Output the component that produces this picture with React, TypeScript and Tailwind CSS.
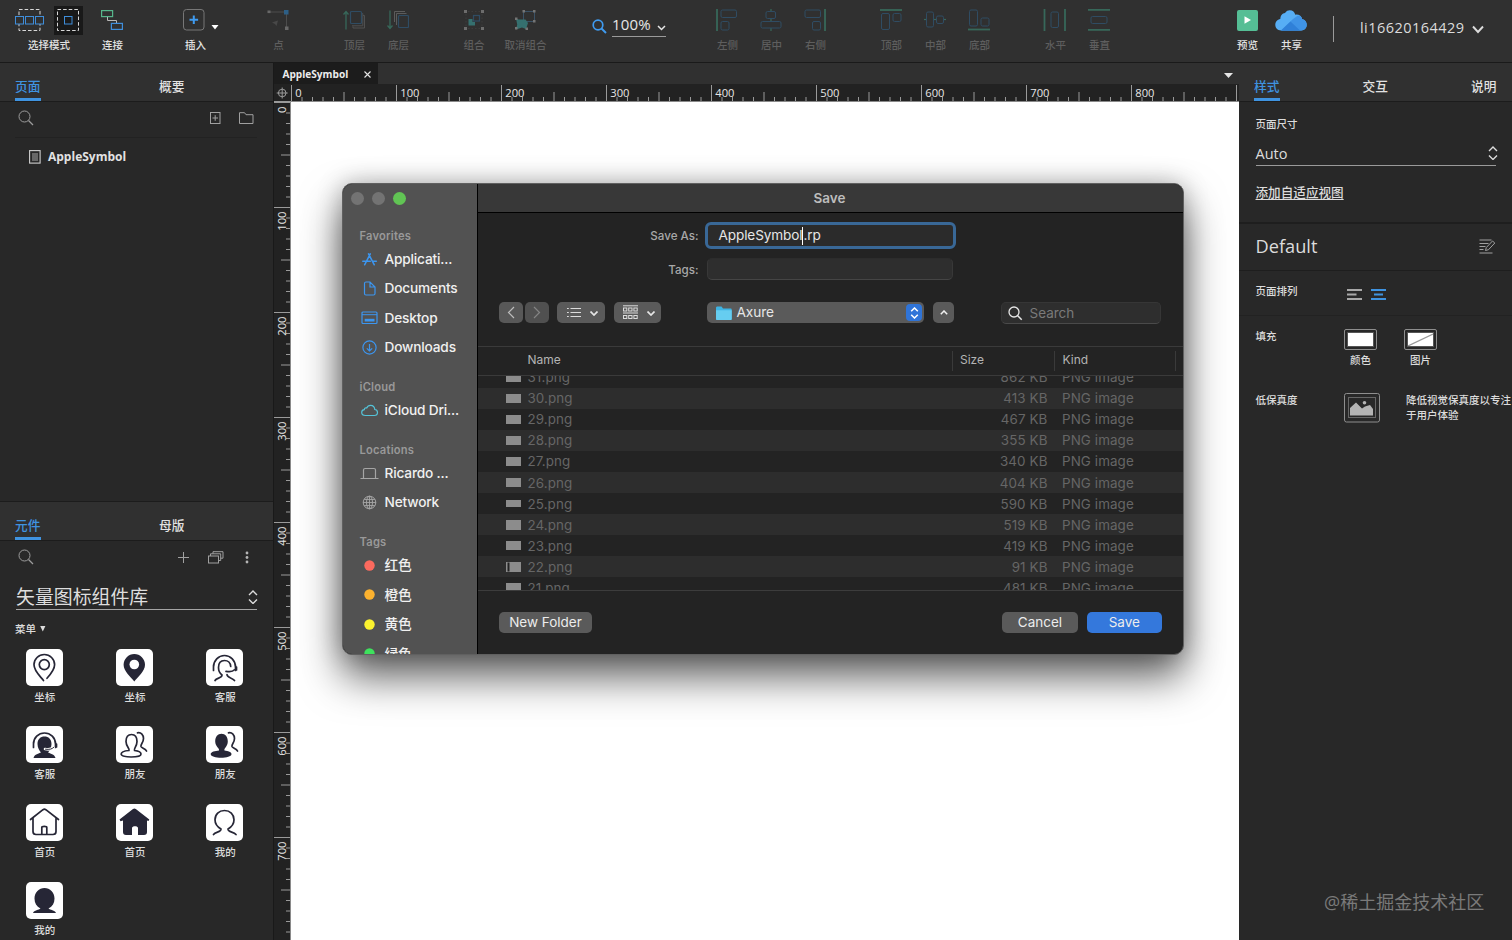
import type { ReactNode } from 'react'
import { clsx } from 'clsx'

const INK = '#262636'

interface SvgProps {
  w: number
  h: number
  className?: string
  children: ReactNode
}

function Svg({ w, h, className, children }: SvgProps) {
  return (
    <svg width={w} height={h} viewBox={`0 0 ${w} ${h}`} fill="none" className={clsx('shrink-0', className)}>
      {children}
    </svg>
  )
}

/* ---------- Toolbar ---------- */

interface ToolProps {
  label: string
  disabled?: boolean
  className?: string
  children: ReactNode
}

function Tool({ label, disabled, className, children }: ToolProps) {
  return (
    <div className={clsx('flex shrink-0 flex-col items-center', className)}>
      <div className="flex h-7 items-center justify-center">{children}</div>
      <span
        className={clsx(
          'mt-1 h-[14px] pl-px text-[10.5px] leading-[14px] font-medium whitespace-nowrap',
          disabled ? 'text-[#5e5e5e]' : 'text-[#e2e2e2]',
        )}
      >
        {label}
      </span>
    </div>
  )
}

const G = '#37685a'
const B = '#2f4c63'

function Toolbar() {
  return (
    <header className="flex h-[63px] shrink-0 border-b border-[#1a1a1a] bg-[#303030] pt-1.5">
      <Tool label="选择模式" className="ml-3 w-[73px]">
        <Svg w={29} h={28}>
          <rect x="4" y="3.5" width="21" height="21" stroke="#d8d8d8" strokeDasharray="3.6 2" />
          <rect x="0.5" y="10.5" width="8" height="7.5" fill="#303030" stroke="#3f8edb" />
          <rect x="10.5" y="10.5" width="8" height="7.5" fill="#303030" stroke="#3f8edb" />
          <rect x="20.5" y="10.5" width="8" height="7.5" fill="#303030" stroke="#3f8edb" />
        </Svg>
        <div className="ml-[10px] flex h-[29px] w-[29px] items-center justify-center bg-[#191919]">
          <Svg w={22} h={22}>
            <rect x="0.5" y="0.5" width="21" height="21" stroke="#d8d8d8" strokeDasharray="3.6 2" />
            <rect x="7.5" y="7.5" width="7.5" height="7.5" stroke="#3f8edb" />
          </Svg>
        </div>
      </Tool>
      <Tool label="连接" className="ml-[5px] w-11">
        <Svg w={22} h={22}>
          <rect x="0.6" y="1.6" width="11" height="6" stroke="#56b68b" strokeWidth="1.2" />
          <path d="M6.5 8v3.5h9V14" stroke="#b9b9b9" />
          <rect x="10.4" y="14.4" width="11" height="6" stroke="#3f8edb" strokeWidth="1.2" />
        </Svg>
      </Tool>
      <Tool label="插入" className="relative ml-[39px] w-11">
        <Svg w={22} h={22} className="mr-[3px]">
          <rect x="0.5" y="0.5" width="20.5" height="20.5" rx="3" stroke="#777" />
          <path d="M6.5 10.8h8.6M10.8 6.5v8.6" stroke="#3f9bf0" strokeWidth="2" />
        </Svg>
        <Svg w={8} h={5} className="absolute top-[18.5px] left-[38px]">
          <path d="M0.5 0h7L4 4.4z" fill="#fff" />
        </Svg>
      </Tool>
      <Tool label="点" disabled className="ml-[39px] w-11">
        <Svg w={22} h={22}>
          <path d="M3 3h14M19.5 5v13" stroke="#4c4c4c" />
          <rect x="0.5" y="1.5" width="3" height="2.6" fill="#686868" />
          <rect x="17" y="1" width="4.5" height="4.5" fill="#2d5f86" />
          <rect x="18" y="17.5" width="3.5" height="3.5" fill="#686868" />
          <path d="M5 13.5l6-2-1.5 5.5-1.5-2z" fill="#484848" />
        </Svg>
      </Tool>
      <Tool label="顶层" disabled className="ml-8 w-11">
        <Svg w={22} h={22}>
          <path d="M3 20.5V3M0.5 5.5L3 2.5l2.5 3" stroke={G} strokeWidth="1.3" />
          <path d="M20 6.5h1.5v12.5H10v-1.5M19 4.5h.8v12.3H9" stroke="#505050" />
          <rect x="7.5" y="2.5" width="11" height="12" rx="1" stroke={B} strokeWidth="1.2" />
        </Svg>
      </Tool>
      <Tool label="底层" disabled className="w-11">
        <Svg w={22} h={22}>
          <path d="M3 1.5V19M0.5 16.5L3 19.5l2.5-3" stroke={G} strokeWidth="1.3" />
          <path d="M7.5 13V2.5H18M9.5 16V4.5H19.5" stroke="#5b5b5b" />
          <rect x="11.5" y="6.5" width="10" height="12" rx="1" stroke={B} strokeWidth="1.2" />
        </Svg>
      </Tool>
      <Tool label="组合" disabled className="ml-[31.5px] w-11">
        <Svg w={22} h={22}>
          {[1, 18].map((x) =>
            [1, 18].map((y) => <rect key={`${x}-${y}`} x={x} y={y} width="3" height="3" fill="#6c6c6c" />),
          )}
          <rect x="10.5" y="6.5" width="6" height="5.5" stroke={B} strokeWidth="1.2" />
          <path d="M5.5 10h4v3H12v3.5H5.5z" fill="#35706f" />
          <path d="M3 5v12M19 5v12M5 2.5h12M5 19.5h12" stroke="#3c3c3c" strokeDasharray="1.5 2" />
        </Svg>
      </Tool>
      <Tool label="取消组合" disabled className="ml-[4.5px] w-[50px]">
        <Svg w={22} h={22}>
          <rect x="9.5" y="2.5" width="11" height="10" stroke="#3b5266" />
          <path d="M2 9.5l2.5 1h7L14 14l-2 6-4-1.5L2 20.5l1.2-5z" fill="#35706f" />
          {[
            [8.5, 1],
            [19, 1],
            [19, 11],
            [1, 8.5],
            [1, 18],
            [11.5, 18.5],
          ].map(([x, y]) => (
            <rect key={`${x}-${y}`} x={x} y={y} width="2.5" height="2.5" fill="#747474" />
          ))}
        </Svg>
      </Tool>

      <div className="mt-[8px] ml-[42px] flex h-[23px] w-[74px]">
        <Svg w={15} h={15} className="mt-[5px]">
          <circle cx="6" cy="6" r="4.8" stroke="#3f9bf0" strokeWidth="1.7" />
          <path d="M9.5 9.5l4.5 4.5" stroke="#3f9bf0" strokeWidth="2" />
        </Svg>
        <div className="ml-[5px] flex w-[54px] items-center border-b border-[#9a9a9a] pb-px text-[15px] text-[#e6e6e6]">
          <span className="w-[45px] tracking-[0.2px]">100%</span>
          <Svg w={9} h={6} className="mt-[7px]">
            <path d="M1 1l3.5 3.5L8 1" stroke="#e6e6e6" strokeWidth="1.5" />
          </Svg>
        </div>
      </div>

      <Tool label="左侧" disabled className="ml-[39px] w-11">
        <Svg w={22} h={22}>
          <path d="M1 0v22" stroke={G} strokeWidth="1.8" />
          <rect x="5" y="1" width="15.5" height="7.5" rx="1.5" stroke={B} />
          <rect x="5" y="12.5" width="8" height="8.5" rx="1.5" stroke={B} />
        </Svg>
      </Tool>
      <Tool label="居中" disabled className="w-11">
        <Svg w={22} h={22}>
          <path d="M11 0v22" stroke={G} strokeWidth="1.2" />
          <rect x="6" y="2.5" width="9.5" height="7" rx="1.5" fill="#303030" stroke={B} />
          <rect x="1" y="12.5" width="20" height="6.5" rx="1.5" fill="#303030" stroke={B} />
        </Svg>
      </Tool>
      <Tool label="右侧" disabled className="w-11">
        <Svg w={22} h={22}>
          <path d="M21 0v22" stroke={G} strokeWidth="1.8" />
          <rect x="1" y="1" width="15.5" height="7.5" rx="1.5" stroke={B} />
          <rect x="8.5" y="12.5" width="8" height="8.5" rx="1.5" stroke={B} />
        </Svg>
      </Tool>
      <Tool label="顶部" disabled className="ml-8 w-11">
        <Svg w={22} h={22}>
          <path d="M0 1h22" stroke={G} strokeWidth="1.8" />
          <rect x="1.5" y="4.5" width="8" height="16" rx="1.5" stroke={B} />
          <rect x="13" y="4.5" width="8" height="8" rx="1.5" stroke={B} />
        </Svg>
      </Tool>
      <Tool label="中部" disabled className="w-11">
        <Svg w={22} h={22}>
          <path d="M0 10.5h22" stroke={G} strokeWidth="1.2" />
          <rect x="2.5" y="3" width="7" height="15" rx="1.5" fill="#303030" stroke={B} />
          <rect x="12.5" y="7" width="7" height="7.5" rx="1.5" fill="#303030" stroke={B} />
        </Svg>
      </Tool>
      <Tool label="底部" disabled className="w-11">
        <Svg w={22} h={22}>
          <path d="M0 20.5h22" stroke={G} strokeWidth="1.8" />
          <rect x="1.5" y="1" width="8" height="16" rx="1.5" stroke={B} />
          <rect x="13" y="9" width="8" height="8" rx="1.5" stroke={B} />
        </Svg>
      </Tool>
      <Tool label="水平" disabled className="ml-8 w-11">
        <Svg w={24} h={22}>
          <path d="M1.5 0v22M22 0v22" stroke={G} strokeWidth="1.8" />
          <rect x="8" y="3" width="7.5" height="15.5" rx="1.5" stroke={B} />
        </Svg>
      </Tool>
      <Tool label="垂直" disabled className="w-11">
        <Svg w={22} h={22}>
          <path d="M0 0.8h22M0 20.8h22" stroke={G} strokeWidth="1.8" />
          <rect x="3" y="7.5" width="16" height="7" rx="1.5" stroke={B} />
        </Svg>
      </Tool>

      <Tool label="预览" className="ml-[104px] w-11">
        <div className="flex h-[21px] w-[21px] items-center justify-center rounded-[2px] bg-[#55be95]">
          <Svg w={7} h={8}>
            <path d="M0.5 0.3L7 4 0.5 7.7z" fill="#fff" />
          </Svg>
        </div>
      </Tool>
      <Tool label="共享" className="w-11">
        <Svg w={32} h={21}>
          <path
            d="M6 20.5C2.5 20.5.3 18 .3 14.8c0-3 2-5.6 5-5.900C5.5 5.5 7.5 3.200 10 3c1.400-2 3-2.700 4.800-2.700 3 0 5 2 5.400 4.400 3.500-.6 6.500 1.300 7 4.600 2.600.3 4.500 2.800 4.500 5.500 0 3.200-2.200 5.700-5.500 5.700z"
            fill="#57aef5"
          />
          <path d="M6 20.5L18 9l5-3.500c2.500.2 4 2 4.200 3.800 2.600.3 4.500 2.800 4.500 5.500 0 3.200-2.200 5.700-5.500 5.700z" fill="#3f93e6" />
          <path d="M6 20.5L15.500 11.500l9.500 9z" fill="#2f80d8" />
        </Svg>
      </Tool>
      <div className="mt-[10px] ml-5 h-[26px] w-px bg-[#9a9a9a]" />
      <div className="mt-[12px] ml-[26px] flex h-5 items-center text-[14.5px] text-[#dcdcdc]">
        <span className="w-[105px] tracking-[0.45px] whitespace-nowrap">li16620164429</span>
        <Svg w={12} h={9} className="mt-[3px] ml-[7px]">
          <path d="M1 1.5l5 5.5 5-5.5" stroke="#dcdcdc" strokeWidth="1.9" />
        </Svg>
      </div>
    </header>
  )
}

/* ---------- Shared panel bits ---------- */

function PanelTabs({ tabs, narrow }: { tabs: string[]; narrow?: boolean }) {
  return (
    <div
      className={clsx(
        'flex h-[39px] shrink-0 border-b border-[#1c1c1c] bg-[#303030] pr-[15px] pl-[15px]',
        narrow && 'justify-between',
      )}
    >
      {tabs.map((tab, i) => (
        <div
          key={tab}
          className={clsx(
            'flex h-[38px] w-[26px] items-end border-b-[3px] pb-[2.5px] text-[12.7px] leading-[20px] font-medium whitespace-nowrap',
            i === 0 ? 'border-[#3f93e0] text-[#3f93e0]' : 'border-transparent text-[#e2e2e2]',
            !narrow && i === 1 && 'ml-[118px]',
          )}
        >
          {tab}
        </div>
      ))}
    </div>
  )
}

function SearchGlyph() {
  return (
    <Svg w={16} h={16}>
      <circle cx="6.5" cy="6.5" r="5.5" stroke="#9c9c9c" />
      <path d="M10.5 10.5l4.5 4.5" stroke="#9c9c9c" strokeWidth="1.2" />
    </Svg>
  )
}

function UpDown({ className }: { className?: string }) {
  return (
    <Svg w={10} h={14} className={className}>
      <path d="M1 5l4-4 4 4M1 9.5l4 4 4-4" stroke="#dcdcdc" strokeWidth="1.4" />
    </Svg>
  )
}

/* ---------- Left side ---------- */

const glyphs: Record<string, ReactNode> = {
  pin: (
    <>
      <path d="M17.5 31.5C14 27 8 22 8 15.8a10.3 10.3 0 0 1 20.6 0c0 5-4 9.5-7.6 13.5" />
      <circle cx="18.3" cy="15.6" r="5" />
    </>
  ),
  pinSolid: (
    <>
      <path d="M18.3 32.5C15 28 7.6 22.5 7.6 15.8a10.7 10.7 0 0 1 21.4 0C29 22.5 21.6 28 18.3 32.5z" fill={INK} stroke="none" />
      <circle cx="18.3" cy="15.5" r="4.8" fill="#fff" stroke="none" />
    </>
  ),
  service: (
    <>
      <path d="M7.5 21.5v-3.500a11 11.500 0 0 1 22 0v3.500M30.500 18v3" />
      <path d="M9 31.500c1.500-3 7-2 7-5.500-2-1.500-3.500-4.500-3.500-7.500 0-4.500 2.500-7 6-7s6 2.500 6.200 6" />
      <path d="M20 22.300c3.500.7 7 .2 8.500-1.500M21 25.500c0 3.500 5.500 3 7.500 6" />
    </>
  ),
  serviceSolid: (
    <>
      <path d="M7.5 21.500V18a11 11 0 0 1 22 0v3.500M30.500 18v3" />
      <path
        d="M11.500 18c0-5 3-7.500 7-7.500s7 2.500 7 7.500c0 4-2 6.500-3.500 8.500 2 1 6.500 1.500 7.500 5.500h-22c1-4 5.500-4.500 7.500-5.500-1.500-2-3.500-4.500-3.500-8.500z"
        fill={INK}
        stroke="none"
      />
      <path d="M19 23c4 .8 7 0 8.500-2" stroke="#fff" strokeWidth="2.6" />
      <path d="M19.500 23.200c4 .5 7 0 8.500-2.200" strokeWidth="1" />
    </>
  ),
  friends: (
    <>
      <path d="M13 24.500c1-2-3-4-3-9 0-4.500 2-7 5.500-7s5.500 2.500 5.500 7c0 5-3.500 7-2.500 9 3.500.4 6.500 1.500 6.500 3.500 0 4-19.800 4-19.800 0 0-2 4-3.200 7.800-3.500z" />
      <path d="M21.500 6.800c3.800-.6 6 2 6 5.700 0 4-3 5.500-2.500 8 .5 1.500 4.500 2 5.500 4.500" />
    </>
  ),
  friendsSolid: (
    <>
      <path
        d="M13 24.500c1-2-3.800-4-3.800-9 0-5 2.500-7.800 6.300-7.800s6.300 2.800 6.300 7.800c0 5-4.300 7-3.300 9 3.500.4 7 1.500 7 3.500 0 5-20.800 5-20.800 0 0-2 4.500-3.200 8.300-3.500z"
        fill={INK}
        stroke="none"
      />
      <path d="M22.500 6.800c3.800-.6 6 2 6 5.700 0 4-3 5.500-2.500 8 .5 1.500 4.500 2 5.500 4.500" />
    </>
  ),
  home: (
    <>
      <path d="M4.500 15.500L17 5.700c1-.7 1.800-.7 2.800 0L32.500 15.500M7 14v13.500c0 2 1 3 3 3h17c2 0 3-1 3-3V14" />
      <path d="M15.800 30V23.500c0-1.500 5-1.500 5 0V30" />
    </>
  ),
  homeSolid: (
    <path
      d="M3.500 15.500L17 5c1-.7 1.800-.7 2.800 0l13.500 10.500-.8 1.500-1.500-.5v11.500c0 2-1 3-3 3h-6v-7c0-2.500-6-2.500-6 0v7H10c-2 0-3-1-3-3V16.500l-2.500.8z"
      fill={INK}
      stroke="none"
    />
  ),
  mine: (
    <path d="M7.500 30.500c2-3 7.500-2 7.500-5.500C11.500 23 9 20 9 15.800c0-5.500 4-9.300 9.500-9.300S28 10.300 28 15.800c0 4.200-2.500 7.200-6 9.200 0 3.500 5.500 2.500 8 5.500" />
  ),
  mineSolid: (
    <path
      d="M7 31c1-3 6-3 7.500-4.500-4-2-6-5.500-6-10 0-6 4.500-10.500 10-10.500s10 4.500 10 10.500c0 4.500-2 8-6 10 1.500 1.500 6.500 1.500 7.500 4.500z"
      fill={INK}
      stroke="none"
    />
  ),
}

const widgets = [
  { glyph: 'pin', label: '坐标' },
  { glyph: 'pinSolid', label: '坐标' },
  { glyph: 'service', label: '客服' },
  { glyph: 'serviceSolid', label: '客服' },
  { glyph: 'friends', label: '朋友' },
  { glyph: 'friendsSolid', label: '朋友' },
  { glyph: 'home', label: '首页' },
  { glyph: 'homeSolid', label: '首页' },
  { glyph: 'mine', label: '我的' },
  { glyph: 'mineSolid', label: '我的' },
]

function LeftPanel() {
  return (
    <aside className="flex w-[274px] shrink-0 flex-col border-r border-[#191919] bg-[#282828]">
      {/* Pages */}
      <section className="flex h-[439px] shrink-0 flex-col border-b border-[#1c1c1c]">
        <PanelTabs tabs={['页面', '概要']} />
        <div className="mr-4 ml-[15px] flex h-9 items-center border-b border-[#222] pb-[3px] pl-[3px]">
          <SearchGlyph />
          <Svg w={11} h={12} className="ml-auto">
            <rect x="0.5" y="0.5" width="9.5" height="11" stroke="#a0a0a0" />
            <path d="M5.2 3.2v5.6M2.5 6h5.5" stroke="#a0a0a0" />
          </Svg>
          <Svg w={15} h={12} className="mr-[3px] ml-[18px]">
            <path d="M0.5 11.5V0.7h5l1.5 2h7v8.800z" stroke="#a0a0a0" />
          </Svg>
        </div>
        <div className="mt-[9px] flex h-5 items-center pl-[29px]">
          <Svg w={12} h={14}>
            <rect x="0.6" y="0.6" width="10.5" height="12.5" stroke="#cfcfcf" strokeWidth="1.1" />
            <path d="M3 4h6M3 6h6M3 8h6M3 10h6" stroke="#b5b5b5" strokeWidth="0.9" />
          </Svg>
          <span className="ml-[7px] text-[12px] font-bold text-[#e2e2e2]">AppleSymbol</span>
        </div>
      </section>

      {/* Widget library */}
      <section className="flex min-h-0 flex-1 flex-col overflow-hidden">
        <PanelTabs tabs={['元件', '母版']} />
        <div className="mr-4 ml-[15px] flex h-8 shrink-0 items-center pl-[3px]">
          <SearchGlyph />
          <Svg w={11} h={11} className="ml-auto">
            <path d="M5.5 0v11M0 5.5h11" stroke="#a0a0a0" />
          </Svg>
          <Svg w={16} h={13} className="ml-[19px]">
            <rect x="0.5" y="5" width="10" height="7" stroke="#a0a0a0" />
            <path d="M2.5 5V2.8h10.200V9.500H10.500M5 2.800V0.700h10v6.500h-2.300" stroke="#a0a0a0" />
          </Svg>
          <Svg w={4} h={13} className="mr-[8.5px] ml-[20.5px]">
            <circle cx="2" cy="2" r="1.4" fill="#b5b5b5" />
            <circle cx="2" cy="6.5" r="1.4" fill="#b5b5b5" />
            <circle cx="2" cy="11" r="1.4" fill="#b5b5b5" />
          </Svg>
        </div>
        <div className="mt-[10px] mr-4 ml-4 flex h-[27px] shrink-0 items-center border-b border-[#a5a5a5]">
          <span className="pt-[2px] text-[18.9px] leading-[24px] text-[#dedede]">矢量图标组件库</span>
          <UpDown className="mt-px mr-[-1px] ml-auto" />
        </div>
        <div className="mt-[12px] ml-[15px] flex h-4 shrink-0 items-center text-[10.5px] font-medium text-[#dcdcdc]">
          菜单
          <Svg w={6} h={6} className="mb-[2px] ml-[4px]">
            <path d="M0.2 0h5.2L2.8 5.5z" fill="#dcdcdc" />
          </Svg>
        </div>
        <div className="mt-[10.5px] grid w-[271px] shrink-0 grid-cols-3">
          {widgets.map((item) => (
            <div key={item.glyph} className="flex h-[77.7px] flex-col items-center pr-[2px]">
              <div className="h-[37px] w-[37px] shrink-0 rounded-[5px] bg-white">
                <svg
                  width="37"
                  height="37"
                  viewBox="0 0 37 37"
                  fill="none"
                  stroke={INK}
                  strokeWidth="1.7"
                  strokeLinecap="round"
                  strokeLinejoin="round"
                >
                  {glyphs[item.glyph]}
                </svg>
              </div>
              <span className="mt-[4px] pl-px text-[10.5px] leading-[14px] font-medium text-[#dcdcdc]">{item.label}</span>
            </div>
          ))}
        </div>
      </section>
    </aside>
  )
}

/* ---------- Canvas ---------- */

const ticks = Array.from({ length: 91 }, (_, i) => i)

function HorizontalRuler() {
  return (
    <Svg w={948} h={18}>
      {ticks.map((i) => {
        const x = 0.5 + i * 10.5
        const top = i % 10 === 0 ? 1 : i % 5 === 0 ? 8 : 13
        return <path key={i} d={`M${x} ${top}V17`} stroke="#9a9a9a" />
      })}
      {ticks
        .filter((i) => i % 10 === 0 && i < 90)
        .map((i) => (
          <text key={i} x={i * 10.5 + 4.3} y="12.8" fontSize="11.2" fill="#e6e6e6">
            {i * 10}
          </text>
        ))}
      <path d="M0 17.5h948" stroke="#8a8a8a" />
    </Svg>
  )
}

function VerticalRuler() {
  return (
    <Svg w={17} h={838}>
      {ticks.map((i) => {
        const y = 0.5 + i * 10.5
        const left = i % 10 === 0 ? 0 : i % 5 === 0 ? 7 : 12
        return <path key={i} d={`M${left} ${y}H16`} stroke="#9a9a9a" />
      })}
      {ticks
        .filter((i) => i % 10 === 0 && i < 80)
        .map((i) => (
          <text
            key={i}
            transform={`translate(12.2 ${i * 10.5 + 4.5}) rotate(-90)`}
            textAnchor="end"
            fontSize="11.2"
            fill="#e6e6e6"
          >
            {i * 10}
          </text>
        ))}
      <path d="M16.5 0v838" stroke="#8a8a8a" />
    </Svg>
  )
}

function Canvas() {
  return (
    <main className="flex w-[965px] shrink-0 flex-col bg-[#222]">
      <div className="flex h-[21px] shrink-0 items-center bg-[#303030]">
        <div className="flex h-full w-[104px] items-center bg-[#1c1c1c] pt-[2px] pl-[8.5px] text-[10.1px] font-bold text-[#ececec]">
          <span className="w-[66px]">AppleSymbol</span>
          <Svg w={7} h={7} className="ml-[15px]">
            <path d="M0.5 0.5l6 6M6.5 0.5l-6 6" stroke="#e6e6e6" strokeWidth="1.1" />
          </Svg>
        </div>
        <Svg w={9} h={5} className="mt-[4px] mr-[6px] ml-auto">
          <path d="M0 0h9L4.5 5z" fill="#e6e6e6" />
        </Svg>
      </div>
      <div className="flex h-[18px] shrink-0">
        <Svg w={17} h={18}>
          <circle cx="8.2" cy="9" r="3.8" stroke="#9a9a9a" />
          <path d="M8.2 3.5v11M2.7 9h11" stroke="#9a9a9a" />
          <path d="M0 17.5h17" stroke="#9a9a9a" />
        </Svg>
        <HorizontalRuler />
      </div>
      <div className="flex min-h-0 flex-1">
        <VerticalRuler />
        <div className="flex-1 bg-white" />
      </div>
    </main>
  )
}

/* ---------- Right side ---------- */

function RightPanel() {
  return (
    <aside className="flex w-[273px] shrink-0 flex-col bg-[#282828] text-[10.5px] font-medium text-[#dcdcdc]">
      <PanelTabs tabs={['样式', '交互', '说明']} narrow />
      <div className="flex h-[122px] shrink-0 flex-col border-b-2 border-[#1e1e1e] pr-4 pl-[16.5px]">
        <span className="mt-[15px] leading-[15px]">页面尺寸</span>
        <div className="mt-[11px] flex h-[23px] items-center border-b border-[#9a9a9a] text-[14.5px] font-normal">
          Auto
          <UpDown className="mt-[-3px] mr-[-2px] ml-auto" />
        </div>
        <span className="mt-[17px] text-[12.6px] leading-[20px] underline underline-offset-2">添加自适应视图</span>
      </div>
      <div className="flex h-[47px] shrink-0 items-center border-b border-[#1e1e1e] pr-4 pb-px pl-[16.5px]">
        <span className="text-[18.2px] font-normal">Default</span>
        <Svg w={17} h={15} className="ml-auto">
          <path d="M0.5 1h12M0.5 4.5h9M0.5 7.5h6M0.5 10.5h4M0.5 14h13" stroke="#a0a0a0" strokeWidth="1.1" />
          <path d="M6.5 11.5l.8-3L13.5 2l2.3 2-6.3 6.700z" stroke="#a0a0a0" fill="#282828" />
        </Svg>
      </div>
      <div className="flex h-[45px] shrink-0 border-b border-[#222] pt-[13px] pl-[16.5px]">
        <span className="w-[91px] shrink-0 leading-[15px]">页面排列</span>
        <Svg w={16} h={11} className="mt-[4.5px]">
          <path d="M0 1h15M0 5.5h9.5M0 10h15" stroke="#a8a8a8" strokeWidth="1.8" />
        </Svg>
        <Svg w={16} h={11} className="mt-[4.5px] ml-[8px]">
          <path d="M0 1h15M3 5.5h9M0 10h15" stroke="#3f93e0" strokeWidth="1.8" />
        </Svg>
      </div>
      <div className="flex h-[77px] shrink-0 pt-[13px] pl-[16.5px]">
        <span className="w-[88.5px] shrink-0 leading-[15px]">填充</span>
        <div className="flex w-[33px] flex-col items-center">
          <div className="h-[21px] w-[33px] rounded-[2px] border border-[#8e8e8e] p-[2px]">
            <div className="h-full w-full border border-[#555] bg-white" />
          </div>
          <span className="mt-[3px] leading-[14px]">颜色</span>
        </div>
        <div className="ml-[27px] flex w-[33px] flex-col items-center">
          <div className="h-[21px] w-[33px] rounded-[2px] border border-[#8e8e8e] p-[2px]">
            <div className="h-full w-full border border-[#555] bg-white">
              <Svg w={25} h={13}>
                <path d="M0 13L25 1" stroke="#999" strokeWidth="1.2" />
              </Svg>
            </div>
          </div>
          <span className="mt-[3px] leading-[14px]">图片</span>
        </div>
      </div>
      <div className="flex pl-[16.5px]">
        <span className="w-[88.5px] shrink-0 leading-[15px]">低保真度</span>
        <Svg w={36} h={30}>
          <rect x="0.5" y="0.5" width="35" height="28.5" rx="2" stroke="#8e8e8e" />
          <rect x="4.5" y="4.5" width="27" height="20" stroke="#666" />
          <path d="M6 22.5V15l6-5.5 6 6 3-2 5-1.5 3 4v6.500z" fill="#b4b4b4" />
          <circle cx="20.5" cy="9.8" r="1.8" fill="#b4b4b4" />
        </Svg>
        <span className="ml-[26px] shrink-0 leading-[14.6px] whitespace-nowrap">
          降低视觉保真度以专注
          <br />
          于用户体验
        </span>
      </div>
      <div className="mt-auto mb-[25px] pl-[85px] text-[18px] leading-[26px] font-normal whitespace-nowrap text-[#7a7a7a]">
        @稀土掘金技术社区
      </div>
    </aside>
  )
}

/* ---------- Save dialog ---------- */

const sideIcons: Record<string, ReactNode> = {
  apps: (
    <path
      d="M8.3 1.8L2.6 12.8M6.5 1.8l5.8 11M0.8 9.2h7.5M10.5 9.2h3.8"
      stroke="#3c96f0"
      strokeWidth="1.5"
      strokeLinecap="round"
    />
  ),
  docs: (
    <path
      d="M2.5 2.5c0-1 .5-1.500 1.500-1.500h4l5 5v6.500c0 1-.5 1.500-1.500 1.500H4c-1 0-1.500-.5-1.500-1.500zM8 1v5h5"
      stroke="#3c96f0"
      strokeWidth="1.2"
    />
  ),
  desktop: (
    <>
      <rect x="0" y="2" width="15" height="11.5" rx="1" stroke="#3c96f0" strokeWidth="1.2" />
      <path d="M0 4.7h15" stroke="#3c96f0" />
      <rect x="2.7" y="8.8" width="9.8" height="2.7" fill="#3c96f0" />
    </>
  ),
  downloads: (
    <>
      <circle cx="7.5" cy="7.5" r="6.6" stroke="#3c96f0" strokeWidth="1.2" />
      <path d="M7.5 4v7M4.8 8.3L7.5 11l2.700-2.700" stroke="#3c96f0" strokeWidth="1.2" />
    </>
  ),
  icloud: (
    <path
      d="M3.5 12.5C1.200 12.500-.3 11.300-.3 9.500c0-1.600 1-2.700 2.600-2.900.2-1.400 1.400-2 2.400-1.700C5.500 3 7 2.300 8.600 2.300c2.500 0 4 2 4.200 4.200 1.700.2 2.700 1.400 2.700 3 0 1.800-1.300 3-3.200 3z"
      stroke="#55c3d8"
      strokeWidth="1.2"
    />
  ),
  laptop: (
    <path d="M1.5 12V4c0-1 .5-1.500 1.500-1.500h9c1 0 1.500.5 1.500 1.500v8M-1.500 12.500h18" stroke="#a5a5a5" strokeWidth="1.2" />
  ),
  network: (
    <>
      <circle cx="7.5" cy="7.5" r="6.3" stroke="#a5a5a5" />
      <ellipse cx="7.5" cy="7.5" rx="3" ry="6.3" stroke="#a5a5a5" />
      <path d="M7.5 1v13M1 7.5h13M2.2 4.5h10.600M2.2 10.5h10.600" stroke="#a5a5a5" strokeWidth="0.9" />
    </>
  ),
  red: <circle cx="7.5" cy="7.5" r="5.2" fill="#fc6a5e" />,
  orange: <circle cx="7.5" cy="7.5" r="5.2" fill="#fcb22f" />,
  yellow: <circle cx="7.5" cy="7.5" r="5.2" fill="#fcf32f" />,
  green: <circle cx="7.5" cy="7.5" r="5.2" fill="#3ee15d" />,
}

const sideSections = [
  {
    title: 'Favorites',
    items: [
      { icon: 'apps', label: 'Applicati...' },
      { icon: 'docs', label: 'Documents' },
      { icon: 'desktop', label: 'Desktop' },
      { icon: 'downloads', label: 'Downloads' },
    ],
  },
  { title: 'iCloud', items: [{ icon: 'icloud', label: 'iCloud Dri...' }] },
  {
    title: 'Locations',
    items: [
      { icon: 'laptop', label: 'Ricardo ...' },
      { icon: 'network', label: 'Network' },
    ],
  },
  {
    title: 'Tags',
    items: [
      { icon: 'red', label: '红色' },
      { icon: 'orange', label: '橙色' },
      { icon: 'yellow', label: '黄色' },
      { icon: 'green', label: '绿色' },
    ],
  },
]

const files = [
  { name: '31.png', size: '862 KB', thumb: 9 },
  { name: '30.png', size: '413 KB', thumb: 9 },
  { name: '29.png', size: '467 KB', thumb: 9 },
  { name: '28.png', size: '355 KB', thumb: 9 },
  { name: '27.png', size: '340 KB', thumb: 9 },
  { name: '26.png', size: '404 KB', thumb: 9 },
  { name: '25.png', size: '590 KB', thumb: 7 },
  { name: '24.png', size: '519 KB', thumb: 10 },
  { name: '23.png', size: '419 KB', thumb: 9 },
  { name: '22.png', size: '91 KB', thumb: 10 },
  { name: '21.png', size: '481 KB', thumb: 9 },
]

function SaveDialog() {
  return (
    <div className="absolute top-[183px] left-[342px] flex h-[472px] w-[842px] overflow-hidden rounded-[10px] border border-[#606060] bg-[#232323] font-['Inter','Noto_Sans_CJK_SC',sans-serif] shadow-[0_22px_42px_rgba(0,0,0,0.62),0_0_24px_rgba(0,0,0,0.25)]">
      <div className="flex w-[134px] shrink-0 flex-col bg-[#525252]">
        <div className="flex h-[26.8px] shrink-0 gap-[8px] pt-[8px] pl-[8px]">
          <span className="h-[13px] w-[13px] rounded-full bg-[#737373]" />
          <span className="h-[13px] w-[13px] rounded-full bg-[#737373]" />
          <span className="h-[13px] w-[13px] rounded-full bg-[#61c454]" />
        </div>
        {sideSections.map((section) => (
          <div key={section.title}>
            <div className="flex h-[33.6px] items-center pt-[17px] pl-[16.5px] text-[11.2px] font-semibold tracking-[0.2px] text-[#999]">
              {section.title}
            </div>
            {section.items.map((item) => (
              <div
                key={item.label}
                className="flex h-[29.4px] items-center pl-[19px] text-[13.7px] font-medium tracking-[-0.18px] text-[#f0f0f0]"
              >
                <Svg w={15} h={15} className="overflow-visible">
                  {sideIcons[item.icon]}
                </Svg>
                <span className="ml-[7.5px] whitespace-nowrap">{item.label}</span>
              </div>
            ))}
          </div>
        ))}
      </div>

      <div className="flex min-w-0 flex-1 flex-col border-l border-black">
        <div className="flex h-[29px] shrink-0 items-center justify-center border-b border-black bg-[#383838] pr-[2px] text-[13.5px] font-semibold text-[#bdbdbd]">
          Save
        </div>

        {/* Name and tags */}
        <div className="mt-[9px] flex h-[26px] shrink-0 items-center">
          <span className="w-[220.5px] pt-[3px] text-right text-[11.6px] font-medium text-[#a8a8a8]">Save As:</span>
          <div className="ml-[6.5px] flex h-[27px] w-[251px] items-center rounded-[6px] border-[3px] border-[#396897] bg-[#2b2b2b] pt-px pl-[10.5px] text-[13.6px] tracking-[-0.12px] text-[#e6e6e6]">
            <span>AppleSymbol</span>
            <span className="h-[18px] w-px bg-white" />
            <span>.rp</span>
          </div>
        </div>
        <div className="mt-[10px] flex h-[22px] shrink-0 items-center">
          <span className="w-[220.5px] pt-[3px] text-right text-[11.6px] font-medium text-[#a8a8a8]">Tags:</span>
          <div className="ml-[8.5px] h-[22px] w-[246px] rounded-[5px] border border-t-[#2c2c2c] border-r-[#383838] border-b-[#454545] border-l-[#383838] bg-[#2e2e2e]" />
        </div>

        {/* Location bar */}
        <div className="mt-[22px] flex h-[21px] shrink-0 pl-[21px]">
          <div className="flex w-[24px] items-center justify-center rounded-[5px] bg-[#585858]">
            <Svg w={8} h={13}>
              <path d="M7 1L1.5 6.5 7 12" stroke="#bdbdbd" strokeWidth="1.2" />
            </Svg>
          </div>
          <div className="ml-[2px] flex w-[24px] items-center justify-center rounded-[5px] bg-[#505050]">
            <Svg w={8} h={13}>
              <path d="M1 1l5.5 5.5L1 12" stroke="#858585" strokeWidth="1.2" />
            </Svg>
          </div>
          <div className="ml-[8px] flex w-[48px] items-center justify-center gap-[9px] rounded-[5px] bg-[#5a5a5a] pl-[3px]">
            <Svg w={14} h={11}>
              <path
                d="M0 1.5h1.8M0 5.5h1.8M0 9.5h1.8M3.5 1.5H14M3.5 5.5H14M3.5 9.5H14"
                stroke="#dcdcdc"
                strokeWidth="1.2"
              />
            </Svg>
            <Svg w={8} h={5} className="mt-[2px]">
              <path d="M0.5 0.5L4 4l3.5-3.5" stroke="#e6e6e6" strokeWidth="1.7" />
            </Svg>
          </div>
          <div className="ml-[9px] flex w-[47px] items-center justify-center gap-[9px] rounded-[5px] bg-[#5a5a5a] pl-[2px]">
            <Svg w={15} h={15}>
              <path d="M0 0.8h15M0 8h15" stroke="#dcdcdc" />
              {[0.5, 5.7, 10.9].map((x) => (
                <g key={x} stroke="#dcdcdc">
                  <rect x={x} y="3" width="3.3" height="3" />
                  <rect x={x} y="10.5" width="3.3" height="3" />
                </g>
              ))}
            </Svg>
            <Svg w={8} h={5} className="mt-[2px]">
              <path d="M0.5 0.5L4 4l3.5-3.5" stroke="#e6e6e6" strokeWidth="1.7" />
            </Svg>
          </div>
          <div className="ml-[46px] flex w-[217px] items-center rounded-[5px] bg-[#5a5a5a] pr-[2px] pl-[9px] text-[13.7px] tracking-[-0.1px] text-[#e6e6e6]">
            <Svg w={16} h={14}>
              <path
                d="M0 2c0-1 .5-1.500 1.500-1.500h4L7 2.500h7.500c.8 0 1.200.4 1.200 1.200v9c0 .8-.4 1.300-1.200 1.300h-13C.5 14 0 13.500 0 12.700z"
                fill="#3fb4e3"
              />
              <path d="M0 4.200h15.700v8.500c0 .8-.4 1.300-1.200 1.300h-13C.5 14 0 13.500 0 12.700z" fill="#66cdf0" />
            </Svg>
            <span className="ml-[4.5px]">Axure</span>
            <div className="ml-auto flex h-[17px] w-[16px] items-center justify-center rounded-[4px] bg-[#2f74d8]">
              <Svg w={9} h={12}>
                <path d="M1.2 4.3L4.5 1l3.3 3.3M1.2 7.7L4.5 11l3.3-3.3" stroke="#fff" strokeWidth="1.5" />
              </Svg>
            </div>
          </div>
          <div className="ml-[9px] flex w-[21px] items-center justify-center rounded-[5px] bg-[#5a5a5a]">
            <Svg w={8} h={5}>
              <path d="M0.8 4.3L4 1l3.2 3.3" stroke="#f0f0f0" strokeWidth="1.5" />
            </Svg>
          </div>
          <div className="ml-[47px] flex h-[22px] w-[160px] items-center rounded-[5px] border border-[#363636] border-b-[#4a4a4a] bg-[#2e2e2e] pl-[6px] text-[13.5px] text-[#7a7a7a]">
            <Svg w={15} h={15}>
              <circle cx="6" cy="6" r="5" stroke="#e6e6e6" strokeWidth="1.3" />
              <path d="M9.7 9.7l4 4" stroke="#e6e6e6" strokeWidth="1.5" />
            </Svg>
            <span className="ml-[6.5px] pt-px">Search</span>
          </div>
        </div>

        {/* File list */}
        <div className="mt-[23px] flex h-[30px] shrink-0 items-center border-t border-b border-[#3a3a3a] text-[12px] text-[#b4b4b4]">
          <span className="w-[473.5px] pb-[2px] pl-[49.5px]">Name</span>
          <span className="flex h-5 w-[102.5px] items-center border-l border-[#3a3a3a] pb-[2px] pl-[7.5px]">Size</span>
          <span className="flex h-5 w-[121px] items-center border-l border-[#3a3a3a] pb-[2px] pl-[7.5px]">Kind</span>
          <span className="h-5 border-l border-[#3a3a3a]" />
        </div>
        <div className="h-[214px] shrink-0 overflow-hidden">
          <div className="-mt-[9.2px]">
            {files.map((file, i) => (
              <div
                key={file.name}
                className={clsx(
                  'flex h-[21.05px] items-center text-[13.4px] tracking-[0.1px] text-[#666]',
                  i % 2 === 1 && 'bg-[#2d2d2d]',
                )}
              >
                <Svg w={15} h={file.thumb} className="ml-[28px] bg-[#8c8c8c]">
                  {file.name === '22.png' && <path d="M2.5 0.5v9" stroke="#222" strokeWidth="2" />}
                </Svg>
                <span className="ml-[6.5px] w-[420px]">{file.name}</span>
                <span className="w-[100px] text-right">{file.size}</span>
                <span className="ml-[14.5px]">PNG image</span>
              </div>
            ))}
          </div>
        </div>

        <div className="flex flex-1 items-start border-t border-[#3c3c3c] pt-[21px] pl-[21px] text-[13.5px] text-[#ececec]">
          <div className="flex h-[21px] w-[93px] items-center justify-center rounded-[5px] bg-[#5a5a5a]">New Folder</div>
          <div className="ml-[410px] flex h-[21px] w-[76px] items-center justify-center rounded-[5px] bg-[#5a5a5a]">
            Cancel
          </div>
          <div className="ml-[8.5px] flex h-[21px] w-[75.5px] items-center justify-center rounded-[5px] bg-[#3478dc]">
            Save
          </div>
        </div>
      </div>
    </div>
  )
}

export default function App() {
  return (
    <div className="relative flex h-[940px] w-[1512px] flex-col overflow-hidden bg-[#282828] font-['Open_Sans','Noto_Sans_CJK_SC',sans-serif]">
      <Toolbar />
      <div className="flex min-h-0 flex-1">
        <LeftPanel />
        <Canvas />
        <RightPanel />
      </div>
      <SaveDialog />
    </div>
  )
}
